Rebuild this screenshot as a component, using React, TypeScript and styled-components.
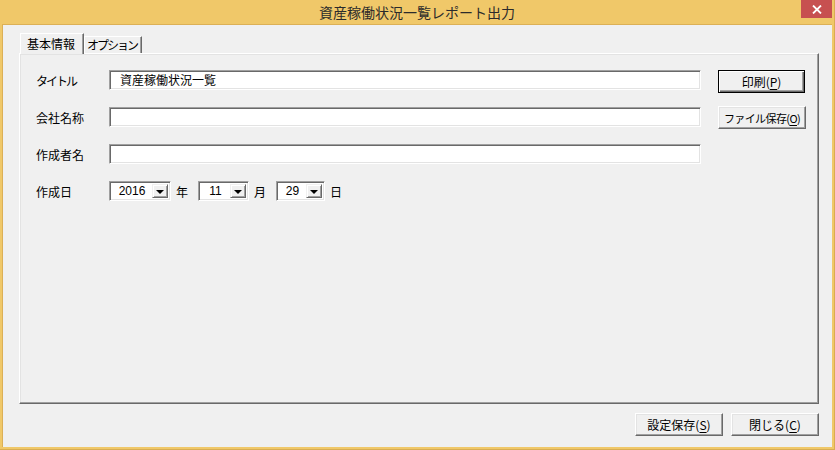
import styled, { createGlobalStyle } from "styled-components"

const GlobalStyle = createGlobalStyle`
    html, body {
        margin: 0;
        padding: 0;
        background: #f0c869;
    }
    body {
        font-family: "Noto Sans CJK JP", "Noto Sans", sans-serif;
        font-size: 12px;
        color: #000;
    }
`

const Window = styled.div`
    width: 835px;
    height: 450px;
    box-sizing: border-box;
    background: #f0c869;
    display: flex;
    flex-direction: column;
    padding: 0 2px 2px 2px;
    border-right: 1px solid #d9ad52;
    border-bottom: 1px solid #d9ad52;
`

const TitleBar = styled.div`
    height: 24px;
    display: grid;
    grid-template-columns: 1fr auto 1fr;
    align-items: start;
    border-bottom: 1px solid #dcb056;
`

const Title = styled.div`
    grid-column: 2;
    line-height: 24px;
    font-size: 14px;
    color: #2b2b2b;
    white-space: nowrap;
`

const CloseButton = styled.div`
    grid-column: 3;
    justify-self: end;
    width: 31px;
    height: 18px;
    background: #c75050;
    display: flex;
    align-items: center;
    justify-content: center;
`

const Client = styled.div`
    flex: 1;
    display: flex;
    flex-direction: column;
    background: #f0f0f0;
    border-left: 1px solid #dcb056;
    padding: 8px 13px 0 16px;
    min-height: 0;
`

const TabStrip = styled.div`
    height: 20px;
    display: flex;
    align-items: flex-end;
    padding-left: 1px;
    position: relative;
    z-index: 1;
`

const Tab = styled.div<{ $active?: boolean }>`
    box-sizing: border-box;
    height: ${p => (p.$active ? "21px" : "17px")};
    margin-bottom: ${p => (p.$active ? "-1px" : "0")};
    padding: ${p => (p.$active ? "0 8px 0 6px" : "0 4px 0 2px")};
    line-height: ${p => (p.$active ? "19px" : "16px")};
    letter-spacing: ${p => (p.$active ? "0" : "-2px")};
    background: #f0f0f0;
    border-top: 1px solid #fff;
    border-left: 1px solid #fff;
    border-right: 1px solid #696969;
    box-shadow: inset -1px 0 0 #a0a0a0;
    white-space: nowrap;
`

const Panel = styled.div`
    flex: 1;
    box-sizing: border-box;
    border-top: 1px solid #fff;
    border-left: 1px solid #fff;
    border-right: 1px solid #696969;
    border-bottom: 1px solid #696969;
    box-shadow: inset -1px -1px 0 #a0a0a0, inset 1px 1px 0 #e3e3e3;
    padding: 16px 13px 0 16px;
    display: flex;
    gap: 17px;
`

const Form = styled.div`
    flex: 1;
    display: flex;
    flex-direction: column;
    gap: 17px;
`

const Row = styled.div`
    height: 20px;
    display: flex;
    align-items: center;
`

const Label = styled.div<{ $narrow?: boolean }>`
    width: 73px;
    flex: none;
    letter-spacing: ${p => (p.$narrow ? "-2px" : "0")};
`

const TextBox = styled.div`
    flex: 1;
    height: 20px;
    box-sizing: border-box;
    background: #fff;
    border: 1px solid;
    border-color: #a0a0a0 #fff #fff #a0a0a0;
    box-shadow: inset 1px 1px 0 #696969, inset -1px -1px 0 #e3e3e3;
    padding-left: 10px;
    line-height: 18px;
    white-space: nowrap;
`

const Combo = styled.div<{ $width: number }>`
    width: ${p => p.$width}px;
    height: 20px;
    box-sizing: border-box;
    background: #fff;
    border: 1px solid;
    border-color: #a0a0a0 #fff #fff #a0a0a0;
    box-shadow: inset 1px 1px 0 #696969, inset -1px -1px 0 #e3e3e3;
    padding: 2px;
    display: flex;
    flex: none;
`

const ComboValue = styled.div`
    flex: 1;
    text-align: center;
    line-height: 14px;
    font-family: "Liberation Sans", "Noto Sans CJK JP", sans-serif;
    font-size: 12px;
`

const DropButton = styled.div`
    width: 16px;
    box-sizing: border-box;
    background: #f0f0f0;
    border: 1px solid;
    border-color: #f0f0f0 #696969 #696969 #f0f0f0;
    box-shadow: inset 1px 1px 0 #fff, inset -1px -1px 0 #a0a0a0;
    display: flex;
    align-items: center;
    justify-content: center;
    &::after {
        content: "";
        border-left: 4px solid transparent;
        border-right: 4px solid transparent;
        border-top: 4px solid #000;
        margin-top: 1px;
    }
`

const Unit = styled.span`
    margin: 0 10px 0 5px;
`

const SideButtons = styled.div`
    width: 87px;
    display: flex;
    flex-direction: column;
    gap: 13px;
`

const Button = styled.button<{ $default?: boolean; $compact?: boolean }>`
    box-sizing: border-box;
    width: ${p => (p.$default ? "87px" : "88px")};
    height: 23px;
    margin: 0;
    padding: 0;
    background: #f0f0f0;
    font-family: "Noto Sans CJK JP", "Noto Sans", sans-serif;
    font-size: ${p => (p.$compact ? "11px" : "12px")};
    letter-spacing: ${p => (p.$compact ? "-0.6px" : "0")};
    white-space: nowrap;
    color: #000;
    border: 1px solid;
    border-color: ${p => (p.$default ? "#000" : "#fff #696969 #696969 #fff")};
    box-shadow: ${p =>
        p.$default
            ? "inset 1px 1px 0 #fff, inset -1px -1px 0 #696969, inset -2px -2px 0 #a0a0a0"
            : "inset -1px -1px 0 #a0a0a0, inset 1px 1px 0 #e3e3e3"};
    u {
        text-decoration-thickness: 1px;
        text-underline-offset: 2px;
    }
`

const Footer = styled.div`
    height: 43px;
    box-sizing: border-box;
    padding-top: 9px;
    display: flex;
    justify-content: flex-end;
    align-items: flex-start;
    gap: 8px;
`

const App = () => {
    return (
        <>
            <GlobalStyle />
            <Window>
                <TitleBar>
                    <Title>資産稼働状況一覧レポート出力</Title>
                    <CloseButton>
                        <svg width="10" height="9" viewBox="0 0 10 9">
                            <path d="M1 0.5 L9 8.5 M9 0.5 L1 8.5" stroke="#fff" strokeWidth="1.8" />
                        </svg>
                    </CloseButton>
                </TitleBar>
                <Client>
                    <TabStrip>
                        <Tab $active>基本情報</Tab>
                        <Tab>オプション</Tab>
                    </TabStrip>
                    <Panel>
                        <Form>
                            <Row>
                                <Label $narrow>タイトル</Label>
                                <TextBox>資産稼働状況一覧</TextBox>
                            </Row>
                            <Row>
                                <Label>会社名称</Label>
                                <TextBox />
                            </Row>
                            <Row>
                                <Label>作成者名</Label>
                                <TextBox />
                            </Row>
                            <Row>
                                <Label>作成日</Label>
                                <Combo $width={62}>
                                    <ComboValue>2016</ComboValue>
                                    <DropButton />
                                </Combo>
                                <Unit>年</Unit>
                                <Combo $width={51}>
                                    <ComboValue>11</ComboValue>
                                    <DropButton />
                                </Combo>
                                <Unit>月</Unit>
                                <Combo $width={49}>
                                    <ComboValue>29</ComboValue>
                                    <DropButton />
                                </Combo>
                                <Unit>日</Unit>
                            </Row>
                        </Form>
                        <SideButtons>
                            <Button $default>印刷(<u>P</u>)</Button>
                            <Button $compact>ファイル保存(<u>O</u>)</Button>
                        </SideButtons>
                    </Panel>
                    <Footer>
                        <Button>設定保存(<u>S</u>)</Button>
                        <Button>閉じる(<u>C</u>)</Button>
                    </Footer>
                </Client>
            </Window>
        </>
    )
}

export default App
